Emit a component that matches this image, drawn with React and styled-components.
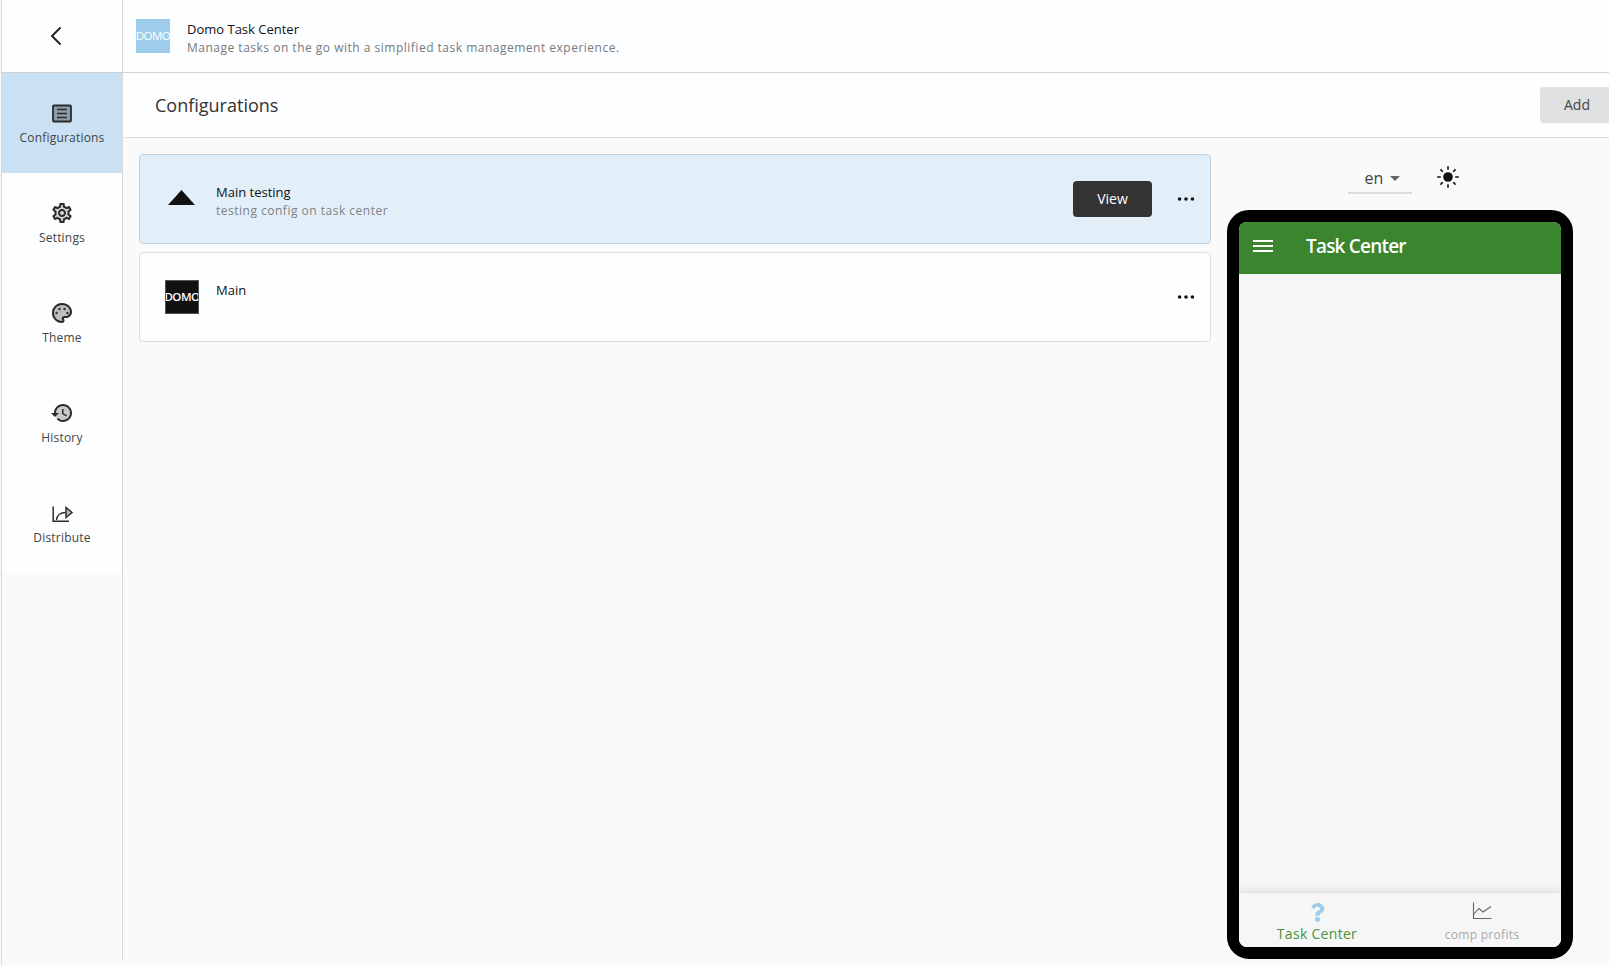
import styled, { createGlobalStyle } from "styled-components";
import { FaQuestion } from "react-icons/fa";

const GlobalStyle = createGlobalStyle`
  html, body {
    margin: 0;
    padding: 0;
    background: #fafafa;
    font-family: "Open Sans", "Liberation Sans", sans-serif;
  }
  * {
    box-sizing: border-box;
  }
`;

const Page = styled.div`
  width: 1609px;
  height: 965px;
  overflow: hidden;
  padding-left: 1px;
`;
const Frame = styled.div`
  height: 100%;
  border-left: 1px solid #d8d8d8;
  display: flex;
  flex-direction: column;
`;
const TopBar = styled.header`
  height: 73px;
  flex-shrink: 0;
  display: flex;
  background: #fdfeff;
  border-bottom: 1px solid #cfd2d5;
`;
const BackCell = styled.div`
  width: 121px;
  display: flex;
  align-items: center;
  justify-content: center;
  padding-right: 12px;
  border-right: 1px solid #d8d8d8;
`;
const AppInfo = styled.div`
  display: flex;
  align-items: center;
  gap: 17px;
  padding-left: 13px;
`;
const Logo = styled.div`
  width: 34px;
  height: 34px;
  flex-shrink: 0;
  display: flex;
  align-items: center;
  justify-content: center;
  overflow: hidden;
  padding-bottom: 1px;
  background: ${(props) => (props.dark ? "#111111" : "#9ecdec")};
  border: ${(props) => (props.dark ? "1px solid #555" : "none")};
  color: #fff;
  font-size: 11.5px;
  font-weight: ${(props) => (props.dark ? 600 : 400)};
  letter-spacing: -0.5px;
`;
const TextStack = styled.div`
  display: flex;
  flex-direction: column;
  gap: 1px;
  padding-top: 5px;
`;
const AppName = styled.div`
  font-size: 13px;
  line-height: 18px;
  color: #111;
`;
const AppDescription = styled.div`
  font-size: 12px;
  line-height: 18px;
  letter-spacing: 0.5px;
  color: #77797c;
`;

const Body = styled.div`
  flex: 1;
  min-height: 0;
  display: flex;
`;
const Sidebar = styled.nav`
  width: 121px;
  height: 887px;
  flex-shrink: 0;
  border-right: 1px solid #d8d8d8;
`;
const NavList = styled.div`
  background: #fdfeff;
`;
const NavItem = styled.div`
  height: 100px;
  display: flex;
  flex-direction: column;
  align-items: center;
  padding-top: 28px;
  background: ${(props) => (props.active ? "#c9e1f3" : "transparent")};
  svg {
    display: block;
    flex-shrink: 0;
  }
`;
const NavLabel = styled.span`
  margin-top: 4px;
  font-size: 12px;
  line-height: 18px;
  letter-spacing: 0.2px;
  color: #444;
`;

const Main = styled.main`
  flex: 1;
  min-width: 0;
`;
const ConfigHeader = styled.div`
  height: 65px;
  display: flex;
  align-items: center;
  justify-content: space-between;
  padding-left: 32px;
  margin-right: -5px;
  background: #fdfeff;
  border-bottom: 1px solid #dcdfe2;
`;
const ConfigTitle = styled.h1`
  margin: 0;
  font-size: 18px;
  font-weight: 400;
  color: #333;
`;
const AddButton = styled.button`
  width: 74px;
  height: 36px;
  border: none;
  border-radius: 4px;
  padding: 0 0 2px;
  background: #dfe0e2;
  color: #444;
  font-family: inherit;
  font-size: 14px;
`;
const Content = styled.div`
  display: flex;
  gap: 16px;
  padding: 16px 0 0 16px;
`;
const CardList = styled.div`
  width: 1072px;
  display: flex;
  flex-direction: column;
  gap: 8px;
`;
const Card = styled.div`
  height: 90px;
  display: flex;
  align-items: center;
  padding-left: ${(props) => (props.selected ? "28px" : "25px")};
  padding-right: 15px;
  background: ${(props) => (props.selected ? "#e3eff8" : "#fdfeff")};
  border: 1px solid ${(props) => (props.selected ? "#bfd2e1" : "#dcdfe2")};
  border-radius: 4px;
`;
const CardMark = styled.div`
  display: flex;
  padding-bottom: 4px;
`;
const CardText = styled.div`
  flex: 1;
  margin-left: ${(props) => (props.selected ? "21px" : "17px")};
  padding-bottom: ${(props) => (props.selected ? "0" : "14px")};
`;
const CardName = styled.div`
  font-size: 13px;
  line-height: 18px;
  font-weight: 500;
  color: #111;
`;
const CardDescription = styled.div`
  font-size: 12px;
  line-height: 18px;
  letter-spacing: 0.5px;
  color: #7d8286;
`;
const ViewButton = styled.button`
  width: 79px;
  height: 36px;
  border: none;
  border-radius: 4px;
  padding: 0 0 2px;
  background: #333;
  color: #fff;
  font-family: inherit;
  font-size: 14px;
`;
const MoreButton = styled.div`
  width: 18px;
  margin-left: 25px;
  display: flex;
  justify-content: center;
`;

const PreviewColumn = styled.div`
  width: 346px;
  flex-shrink: 0;
`;
const PreviewControls = styled.div`
  height: 56px;
  display: flex;
  align-items: flex-start;
  gap: 24px;
  padding: 11px 0 0 121px;
`;
const LocaleSelect = styled.div`
  width: 64px;
  height: 29px;
  display: flex;
  align-items: center;
  justify-content: center;
  gap: 7px;
  padding: 0 0 1px 5px;
  border-bottom: 2px solid #dcdcdc;
  font-size: 16px;
  color: #444;
`;
const Caret = styled.span`
  width: 0;
  height: 0;
  border-left: 5.5px solid transparent;
  border-right: 5.5px solid transparent;
  border-top: 5px solid #666;
`;
const Phone = styled.div`
  width: 346px;
  height: 749px;
  border: 12px solid #000;
  border-radius: 22px;
  background: #000;
`;
const Screen = styled.div`
  height: 100%;
  display: flex;
  flex-direction: column;
  overflow: hidden;
  border-radius: 8px;
  background: #f6f6f6;
`;
const PhoneHeader = styled.div`
  height: 52px;
  flex-shrink: 0;
  display: flex;
  align-items: center;
  gap: 33px;
  padding: 0 0 4px 14px;
  background: #3a852d;
  color: #fff;
`;
const PhoneTitle = styled.div`
  font-size: 19px;
  font-weight: 600;
  letter-spacing: -0.8px;
`;
const PhoneBody = styled.div`
  flex: 1;
`;
const TabBar = styled.div`
  height: 55px;
  flex-shrink: 0;
  display: grid;
  grid-template-columns: 156px 158px;
  gap: 8px;
  border-top: 1px solid #e2e2e2;
  box-shadow: 0 -3px 6px rgba(0, 0, 0, 0.07);
  background: #f6f6f6;
`;
const Tab = styled.div`
  display: flex;
  flex-direction: column;
  align-items: center;
`;
const IconSlot = styled.span`
  height: ${(props) => (props.active ? "32px" : "33px")};
  padding-top: ${(props) => (props.active ? "10px" : "9px")};
  color: #9ecdec;
  svg {
    display: block;
  }
`;
const TabLabel = styled.span`
  font-size: ${(props) => (props.active ? "14px" : "12px")};
  line-height: 18px;
  letter-spacing: 0.3px;
  color: ${(props) => (props.active ? "#4a9140" : "#a9a9a9")};
`;

const BackIcon = () => (
  <svg width="14" height="20" viewBox="0 0 14 20" fill="none" stroke="#222" strokeWidth="2">
    <polyline points="11.5,1.5 3,10 11.5,18.5" />
  </svg>
);

const ListIcon = () => (
  <svg width="24" height="24" viewBox="0 0 24 24">
    <rect x="3" y="4.5" width="18" height="16" rx="1" fill="#000" fillOpacity=".3" stroke="#2b2b2b" strokeWidth="1.8" />
    <path d="M7 8.5h10M7 12.5h10M7 16.5h10" stroke="#2b2b2b" strokeWidth="1.5" />
  </svg>
);

const gearOuter =
  "M19.43 12.98c.04-.32.07-.64.07-.98 0-.34-.03-.66-.07-.98l2.11-1.65c.19-.15.24-.42.12-.64l-2-3.46c-.09-.16-.26-.25-.44-.25-.06 0-.12.01-.17.03l-2.49 1c-.52-.4-1.08-.73-1.69-.98l-.38-2.65C14.46 2.18 14.25 2 14 2h-4c-.25 0-.46.18-.49.42l-.38 2.65c-.61.25-1.17.59-1.69.98l-2.49-1c-.06-.02-.12-.03-.18-.03-.17 0-.34.09-.43.25l-2 3.46c-.13.22-.07.49.12.64l2.11 1.65c-.04.32-.07.65-.07.98 0 .33.03.66.07.98l-2.11 1.65c-.19.15-.24.42-.12.64l2 3.46c.09.16.26.25.44.25.06 0 .12-.01.17-.03l2.49-1c.52.4 1.08.73 1.69.98l.38 2.65c.03.24.24.42.49.42h4c.25 0 .46-.18.49-.42l.38-2.65c.61-.25 1.17-.59 1.69-.98l2.49 1c.06.02.12.03.18.03.17 0 .34-.09.43-.25l2-3.46c.12-.22.07-.49-.12-.64l-2.11-1.65z";
const gearInner =
  "m-1.98-1.71c.04.31.05.52.05.73 0 .21-.02.43-.05.73l-.14 1.13.89.7 1.08.84-.7 1.21-1.27-.51-1.04-.42-.9.68c-.43.32-.84.56-1.25.73l-1.06.43-.16 1.13-.2 1.35h-1.4l-.19-1.35-.16-1.13-1.06-.43c-.43-.18-.83-.41-1.23-.71l-.91-.7-1.06.43-1.27.51-.7-1.21 1.08-.84.89-.7-.14-1.13c-.03-.31-.05-.54-.05-.74s.02-.43.05-.73l.14-1.13-.89-.7-1.08-.84.7-1.21 1.27.51 1.04.42.9-.68c.43-.32.84-.56 1.25-.73l1.06-.43.16-1.13.2-1.35h1.39l.19 1.35.16 1.13 1.06.43c.43.18.83.41 1.23.71l.91.7 1.06-.43 1.27-.51.7 1.21-1.07.85-.89.7.14 1.13zM12 8c-2.21 0-4 1.79-4 4s1.79 4 4 4 4-1.79 4-4-1.79-4-4-4zm0 6c-1.1 0-2-.9-2-2s.9-2 2-2 2 .9 2 2-.9 2-2 2z";

const SettingsIcon = () => (
  <svg width="24" height="24" viewBox="0 0 24 24" fill="#2b2b2b">
    <path d={gearOuter} opacity=".18" />
    <path d={gearOuter + gearInner} fillRule="evenodd" />
  </svg>
);

const paletteOuter =
  "M12 22C6.49 22 2 17.51 2 12S6.49 2 12 2s10 4.04 10 9c0 3.31-2.69 6-6 6h-1.77c-.28 0-.5.22-.5.5 0 .12.05.23.13.33.41.47.64 1.06.64 1.67 0 1.38-1.12 2.5-2.5 2.5z";

const ThemeIcon = () => (
  <svg width="24" height="24" viewBox="0 0 24 24" fill="#2b2b2b">
    <path d={paletteOuter} opacity=".3" />
    <path
      d={
        paletteOuter +
        "m0-18c-4.41 0-8 3.59-8 8s3.59 8 8 8c.28 0 .5-.22.5-.5 0-.16-.08-.28-.14-.35-.41-.46-.63-1.05-.63-1.65 0-1.38 1.12-2.5 2.5-2.5H16c2.21 0 4-1.79 4-4 0-3.86-3.59-7-8-7z"
      }
      fillRule="evenodd"
    />
    <circle cx="6.5" cy="12" r="1.2" />
    <circle cx="9.5" cy="8" r="1.2" />
    <circle cx="14.5" cy="8" r="1.2" />
    <circle cx="17.5" cy="12" r="1.2" />
  </svg>
);

const HistoryIcon = () => (
  <svg width="24" height="24" viewBox="0 0 24 24" fill="#2b2b2b">
    <circle cx="13" cy="12" r="8" opacity=".25" />
    <path d="M13 3c-4.97 0-9 4.03-9 9H1l3.89 3.89.07.14L9 12H6c0-3.87 3.13-7 7-7s7 3.13 7 7-3.13 7-7 7c-1.93 0-3.68-.79-4.94-2.06l-1.42 1.42C8.27 19.99 10.51 21 13 21c4.97 0 9-4.03 9-9s-4.03-9-9-9zm-1 5v5l4.28 2.54.72-1.21-3.5-2.08V8H12z" />
  </svg>
);

const DistributeIcon = () => (
  <svg width="24" height="24" viewBox="0 0 24 24" fill="none" stroke="#2b2b2b" strokeWidth="1.5">
    <path d="M3.2 5.5V20.2H19" />
    <path d="M6.5 19c.4-4.5 4-7.5 9-7.5" />
    <path d="M16 6.5l6 5-6 5z" fill="#000" fillOpacity=".25" />
  </svg>
);

const ArrowMark = () => (
  <svg width="27" height="15" viewBox="0 0 27 15" fill="#111">
    <polygon points="13.5,0 27,15 0,15" />
  </svg>
);

const DotsIcon = () => (
  <svg width="18" height="4" viewBox="0 0 18 4" fill="#111">
    <circle cx="2.6" cy="2" r="1.8" />
    <circle cx="9" cy="2" r="1.8" />
    <circle cx="15.4" cy="2" r="1.8" />
  </svg>
);

const SunIcon = () => (
  <svg width="24" height="24" viewBox="0 0 24 24" stroke="#111" strokeWidth="1.6">
    <circle cx="12" cy="12" r="4.8" fill="#111" stroke="none" />
    <path d="M12 1.2v3.6M12 19.2v3.6M1.2 12h3.6M19.2 12h3.6M4.4 4.4l2.4 2.4M17.2 17.2l2.4 2.4M4.4 19.6l2.4-2.4M17.2 6.8l2.4-2.4" />
  </svg>
);

const MenuIcon = () => (
  <svg width="20" height="14" viewBox="0 0 20 14" stroke="#fff" strokeWidth="2">
    <path d="M0 2h20M0 7h20M0 12h20" />
  </svg>
);

const ChartIcon = () => (
  <svg width="20" height="18" viewBox="0 0 20 18" fill="none" stroke="#666" strokeWidth="1.1">
    <path d="M1.5 0.5V16.5H19.5" />
    <path d="M1.5 12.5L7 6.5l4 3.5 8-5.5" />
  </svg>
);

const navItems = [
  { label: "Configurations", Icon: ListIcon, active: true },
  { label: "Settings", Icon: SettingsIcon },
  { label: "Theme", Icon: ThemeIcon },
  { label: "History", Icon: HistoryIcon },
  { label: "Distribute", Icon: DistributeIcon },
];

const App = () => {
  return (
    <>
      <GlobalStyle />
      <Page>
        <Frame>
          <TopBar>
            <BackCell>
              <BackIcon />
            </BackCell>
            <AppInfo>
              <Logo>DOMO</Logo>
              <TextStack>
                <AppName>Domo Task Center</AppName>
                <AppDescription>
                  Manage tasks on the go with a simplified task management experience.
                </AppDescription>
              </TextStack>
            </AppInfo>
          </TopBar>
          <Body>
            <Sidebar>
              <NavList>
                {navItems.map(({ label, Icon, active }) => (
                  <NavItem key={label} active={active}>
                    <Icon />
                    <NavLabel>{label}</NavLabel>
                  </NavItem>
                ))}
              </NavList>
            </Sidebar>
            <Main>
              <ConfigHeader>
                <ConfigTitle>Configurations</ConfigTitle>
                <AddButton>Add</AddButton>
              </ConfigHeader>
              <Content>
                <CardList>
                  <Card selected>
                    <CardMark>
                      <ArrowMark />
                    </CardMark>
                    <CardText selected>
                      <TextStack>
                        <CardName>Main testing</CardName>
                        <CardDescription>testing config on task center</CardDescription>
                      </TextStack>
                    </CardText>
                    <ViewButton>View</ViewButton>
                    <MoreButton>
                      <DotsIcon />
                    </MoreButton>
                  </Card>
                  <Card>
                    <Logo dark>DOMO</Logo>
                    <CardText>
                      <CardName>Main</CardName>
                    </CardText>
                    <MoreButton>
                      <DotsIcon />
                    </MoreButton>
                  </Card>
                </CardList>
                <PreviewColumn>
                  <PreviewControls>
                    <LocaleSelect>
                      en
                      <Caret />
                    </LocaleSelect>
                    <SunIcon />
                  </PreviewControls>
                  <Phone>
                    <Screen>
                      <PhoneHeader>
                        <MenuIcon />
                        <PhoneTitle>Task Center</PhoneTitle>
                      </PhoneHeader>
                      <PhoneBody />
                      <TabBar>
                        <Tab>
                          <IconSlot active>
                            <FaQuestion size={19} />
                          </IconSlot>
                          <TabLabel active>Task Center</TabLabel>
                        </Tab>
                        <Tab>
                          <IconSlot>
                            <ChartIcon />
                          </IconSlot>
                          <TabLabel>comp profits</TabLabel>
                        </Tab>
                      </TabBar>
                    </Screen>
                  </Phone>
                </PreviewColumn>
              </Content>
            </Main>
          </Body>
        </Frame>
      </Page>
    </>
  );
};

export default App;
